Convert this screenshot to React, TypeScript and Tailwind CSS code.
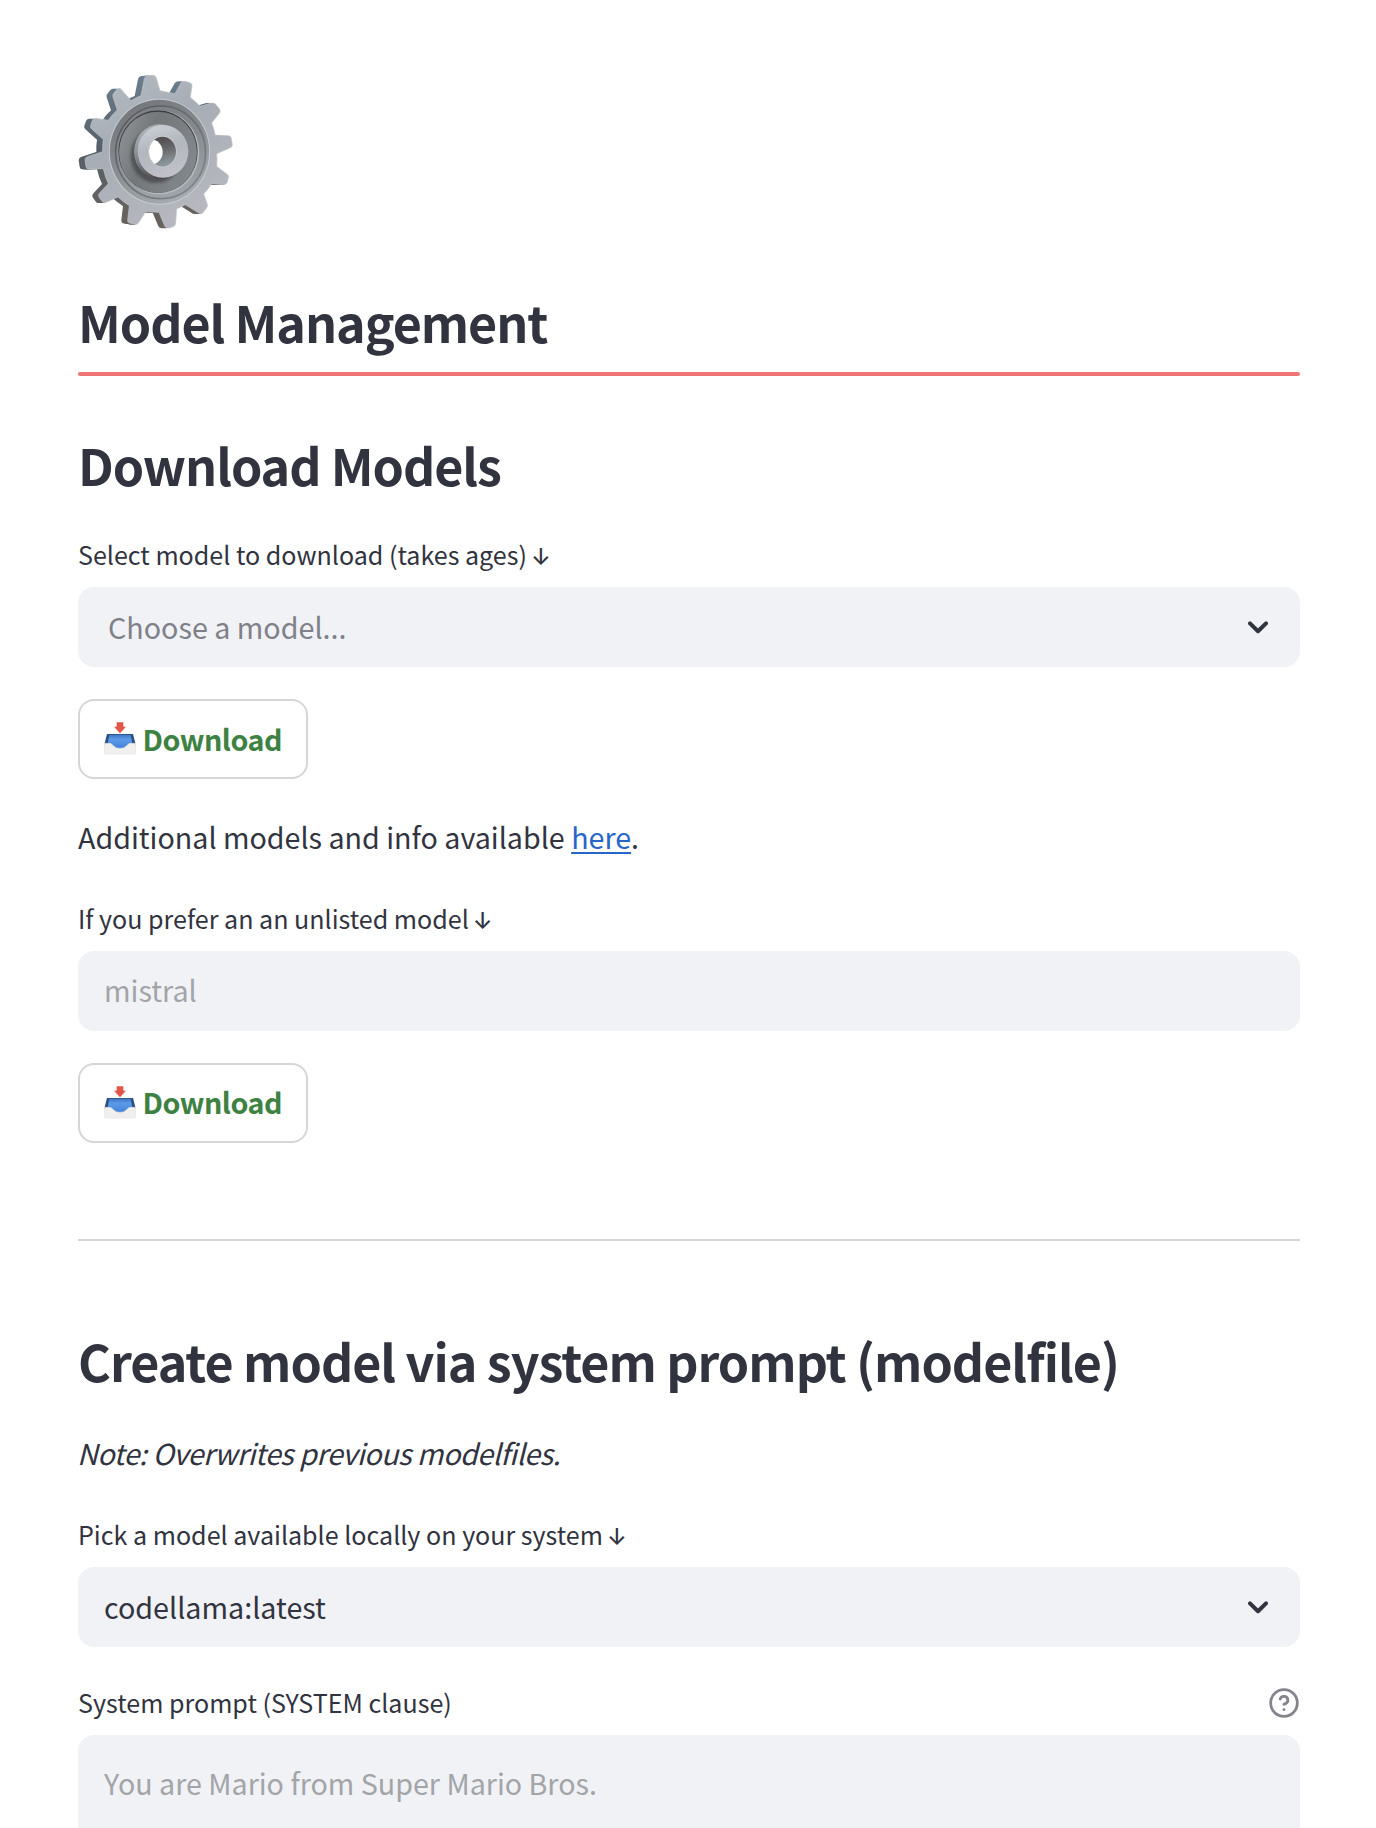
import type { ReactNode } from "react";
import { HelpCircle } from "lucide-react";

const GEAR =
  "M243 107 L253 56 Q255 48 263 47 L280 46 Q287 47 289 54 L300 92 L345 101 L363 69 Q367 62 375 64 L390 68 Q397 70 396 78 L391 112 Q406 124 420 139 L456 129 Q463 128 467 133 L479 148 Q483 154 478 160 L455 189 Q462 206 466 226 L506 227 Q513 228 514 235 L517 254 Q517 262 509 264 L470 281 Q472 300 470 319 L503 344 Q507 348 505 354 L501 368 Q498 374 490 374 L455 371 Q445 387 431 402 L442 433 Q444 438 440 443 L430 457 Q426 462 418 460 L376 434 Q364 441 350 446 L347 490 Q346 498 339 500 L324 504 Q317 504 314 498 L297 457 L257 455 L236 488 Q232 494 225 492 L208 489 Q202 487 203 480 L208 437 Q190 426 174 411 L138 427 Q131 429 127 425 L117 411 Q114 405 118 400 L145 371 Q135 350 130 326 L86 327 Q79 327 78 320 L75 300 Q75 293 82 290 L128 275 Q127 256 130 238 L95 207 Q90 202 92 196 L97 182 Q100 175 107 175 L145 181 Q156 164 172 150 L159 111 Q157 105 161 100 L171 88 Q176 83 182 86 L213 122 Q227 113 243 107 Z";

// Stacked copies behind the front face give the wheel its thickness.
const SIDES = [
  "translate(-19 1)",
  "translate(-16 1)",
  "translate(-13 1)",
  "translate(-10 1)",
  "translate(-7 1)",
  "translate(-4 1)",
];

function Gear() {
  return (
    <svg className="block h-[156px] w-[156px]" viewBox="54 42 468 468" aria-label="gear">
      <defs>
        <linearGradient id="face" x1="0" y1="0" x2="0.5" y2="1">
          <stop offset="0" stopColor="#b6bdc4" />
          <stop offset="0.45" stopColor="#a7adb4" />
          <stop offset="1" stopColor="#b6b7bf" />
        </linearGradient>
        <linearGradient id="side" x1="0" y1="0" x2="0" y2="1">
          <stop offset="0" stopColor="#6c7f8e" />
          <stop offset="0.5" stopColor="#565f68" />
          <stop offset="1" stopColor="#69625d" />
        </linearGradient>
        <linearGradient id="groove" x1="0.1" y1="0" x2="0.6" y2="1">
          <stop offset="0" stopColor="#707478" />
          <stop offset="0.5" stopColor="#858a8e" />
          <stop offset="1" stopColor="#a5abaf" />
        </linearGradient>
        <linearGradient id="ring" x1="0.2" y1="0" x2="0.4" y2="1">
          <stop offset="0" stopColor="#7c7f83" />
          <stop offset="0.5" stopColor="#8a8f93" />
          <stop offset="1" stopColor="#9ea5aa" />
        </linearGradient>
        <linearGradient id="lip" x1="0" y1="0" x2="0.8" y2="1">
          <stop offset="0" stopColor="#54565a" />
          <stop offset="0.5" stopColor="#6a6c70" />
          <stop offset="1" stopColor="#80868b" />
        </linearGradient>
        <linearGradient id="dish" x1="0" y1="0.3" x2="1" y2="0.7">
          <stop offset="0" stopColor="#8b9093" />
          <stop offset="0.35" stopColor="#74777a" />
          <stop offset="1" stopColor="#83888c" />
        </linearGradient>
        <linearGradient id="hub" x1="0.2" y1="0" x2="0.5" y2="1">
          <stop offset="0" stopColor="#ccd1d7" />
          <stop offset="0.45" stopColor="#b2b6bd" />
          <stop offset="1" stopColor="#c0c1c9" />
        </linearGradient>
        <linearGradient id="hubside" x1="0.1" y1="0" x2="0.5" y2="1">
          <stop offset="0" stopColor="#b8bdc1" />
          <stop offset="0.5" stopColor="#84898e" />
          <stop offset="1" stopColor="#4d4648" />
        </linearGradient>
        <linearGradient id="bore" x1="0" y1="0" x2="0.2" y2="1">
          <stop offset="0" stopColor="#4e4344" />
          <stop offset="0.5" stopColor="#65676b" />
          <stop offset="1" stopColor="#8d979e" />
        </linearGradient>
        <filter id="soft" x="-30%" y="-30%" width="160%" height="160%">
          <feGaussianBlur stdDeviation="5" />
        </filter>
        <clipPath id="borehole">
          <ellipse cx="307.5" cy="275" rx="40.5" ry="45" />
        </clipPath>
        <clipPath id="dishclip">
          <ellipse cx="295" cy="276" rx="118" ry="123" />
        </clipPath>
      </defs>
      <g fill="url(#side)">
        {SIDES.map((t) => (
          <path key={t} d={GEAR} transform={t} />
        ))}
      </g>
      <path d={GEAR} fill="url(#face)" stroke="#bfc4ca" strokeWidth="2" />
      <ellipse cx="298.5" cy="275" rx="152" ry="159" fill="#c6cbd0" />
      <ellipse cx="298.5" cy="275" rx="149" ry="156" fill="url(#groove)" />
      <ellipse cx="302" cy="277" rx="135" ry="139" fill="url(#ring)" stroke="url(#lip)" strokeWidth="5" />
      <ellipse cx="297" cy="277" rx="121" ry="126" fill="#b4babf" />
      <ellipse cx="294" cy="275" rx="119" ry="124" fill="#3d3c40" />
      <ellipse cx="294" cy="277" rx="117" ry="122" fill="url(#dish)" />
      <g clipPath="url(#dishclip)">
        <ellipse cx="288" cy="287" rx="76" ry="82" fill="#47484c" opacity=".8" filter="url(#soft)" />
      </g>
      <ellipse cx="299" cy="275" rx="77" ry="82" fill="url(#hubside)" />
      <ellipse cx="309" cy="274" rx="76" ry="79" fill="url(#hub)" />
      <ellipse cx="307.5" cy="275" rx="42.5" ry="47" fill="#ced2d7" />
      <ellipse cx="307.5" cy="275" rx="40.5" ry="45" fill="url(#bore)" />
      <ellipse cx="272" cy="276" rx="36" ry="38" fill="#ffffff" clipPath="url(#borehole)" />
    </svg>
  );
}

function InboxTray() {
  return (
    <svg className="block h-[33px] w-[32px]" viewBox="132 578 96 99" aria-label="inbox tray">
      <defs>
        <linearGradient id="trayblue" x1="0" y1="0" x2="0" y2="1">
          <stop offset="0" stopColor="#3d74bd" />
          <stop offset="0.3" stopColor="#5c9bea" />
          <stop offset="1" stopColor="#3f7bd0" />
        </linearGradient>
      </defs>
      <path d="M141 614H219L227 646H133Z" fill="#294f80" />
      <path d="M148 616H212L218 648L196 662H164L142 648Z" fill="url(#trayblue)" />
      <path
        d="M133 642H149Q155 642 160 649Q167 657 180 657Q193 657 200 649Q205 642 211 642H227V671Q227 674 223 674H137Q133 674 133 671Z"
        fill="#f1f0ee"
        stroke="#dededc"
        strokeWidth="1.5"
      />
      <path d="M170 579H190V592H198L180 612L162 592H170Z" fill="#e2564a" />
    </svg>
  );
}

function Chevron() {
  return (
    <svg className="mt-0.5 mr-8 block h-[14px] w-5" viewBox="0 0 20 14" fill="none">
      <path d="M2 2.4L10 10.2L18 2.4" stroke="#31333f" strokeWidth="4" strokeLinecap="round" strokeLinejoin="round" />
    </svg>
  );
}

function Heading({ children, className }: { children: ReactNode; className: string }) {
  return (
    <h2 className={`text-[50.2px] leading-[60px] font-semibold whitespace-nowrap ${className}`}>{children}</h2>
  );
}

function Label({ children, arrow }: { children: ReactNode; arrow?: boolean }) {
  return (
    <div className="flex h-10 text-[25.07px] leading-10 whitespace-nowrap">
      <span>{children}</span>
      {arrow && <span className="ml-1 font-['Inter'] text-[23px] leading-[46px] font-medium">↓</span>}
    </div>
  );
}

function DownloadButton({ textClass }: { textClass: string }) {
  return (
    <button className="mt-8 flex h-20 w-[230px] items-center rounded-2xl border-2 border-[#d6d6d9] pl-6 text-[28.7px] font-bold tracking-[-0.5px] text-[#3d8243]">
      <span className="-mt-px">
        <InboxTray />
      </span>
      <span className={`ml-[6.5px] ${textClass}`}>Download</span>
    </button>
  );
}

const FIELD = "mt-[13px] flex h-20 w-full items-center justify-between rounded-2xl bg-[#f0f2f6]";

export default function App() {
  return (
    <main className="h-[1828px] overflow-hidden bg-white pt-[74px] pr-[76px] pl-[78px] font-['Noto_Sans_CJK_SC',sans-serif] text-[28.7px] text-[#31333f]">
      <Gear />
      <Heading className="mt-[61px] tracking-[-1.05px]">Model Management</Heading>
      <div className="mt-[21px] h-1 rounded-[2px] bg-[#f07575]" />
      <Heading className="mt-[58px] tracking-[-1.05px]">Download Models</Heading>

      <div className="mt-10">
        <Label arrow>Select model to download (takes ages)</Label>
        <div className={`${FIELD} pb-px pl-[30px] text-[#7f8088]`}>
          <span>Choose a model...</span>
          <Chevron />
        </div>
      </div>
      <DownloadButton textClass="-mt-px" />

      <p className="mt-[34px] text-[28.65px] leading-[48px]">
        Additional models and info available{" "}
        <a className="text-[#2566c8] underline decoration-2 underline-offset-[3px]">here</a>.
      </p>

      <div className="mt-[37px]">
        <Label arrow>If you prefer an an unlisted model</Label>
        <div className={`${FIELD} pb-[3px] pl-[26px] text-[#a3a4a8]`}>
          <span>mistral</span>
        </div>
      </div>
      <DownloadButton textClass="-mt-[3px]" />

      <hr className="mt-24 h-0.5 border-0 bg-[#d6d6d9]" />

      <Heading className="mt-[89px] tracking-[-1px]">Create model via system prompt (modelfile)</Heading>
      <p className="mt-[39px] -ml-px leading-[48px] tracking-[-0.48px] italic">Note: Overwrites previous modelfiles.</p>

      <div className="mt-[37px]">
        <Label arrow>Pick a model available locally on your system</Label>
        <div className={`${FIELD} pb-px pl-[26px]`}>
          <span>codellama:latest</span>
          <Chevron />
        </div>
      </div>

      <div className="mt-[35px]">
        <div className="flex items-center justify-between">
          <Label>System prompt (SYSTEM clause)</Label>
          <HelpCircle className="mt-0.5 h-8 w-8 text-[#83848c]" strokeWidth={2.1} />
        </div>
        <div className="mt-[13px] h-[93px] rounded-t-2xl bg-[#f0f2f6] pt-6 pl-[26px] text-[28.65px] leading-[48px] text-[#a3a4a8]">
          You are Mario from Super Mario Bros.
        </div>
      </div>
    </main>
  );
}
